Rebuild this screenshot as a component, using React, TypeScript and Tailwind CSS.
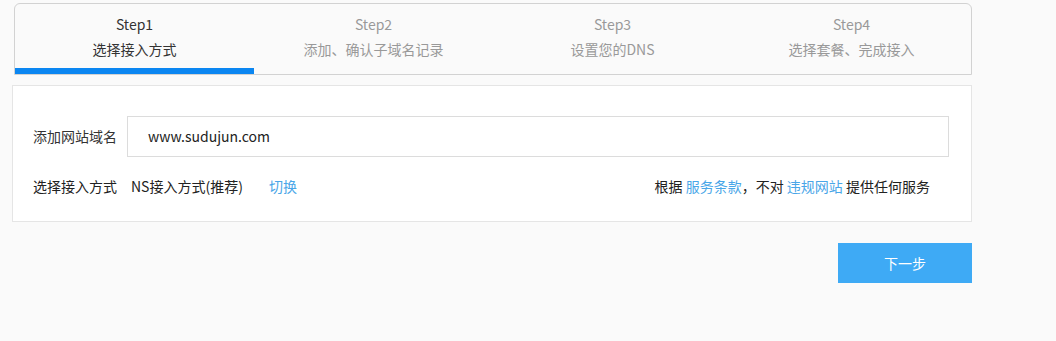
const steps = [
  { title: "Step1", desc: "选择接入方式" },
  { title: "Step2", desc: "添加、确认子域名记录" },
  { title: "Step3", desc: "设置您的DNS" },
  { title: "Step4", desc: "选择套餐、完成接入" },
];

export default function App() {
  const active = 0;
  return (
    <div
      className="min-h-[341px] w-full bg-[#fafafa] pl-[12px] pt-[3px]"
      style={{ fontFamily: '"Noto Sans CJK SC", "Noto Sans", sans-serif' }}
    >
      <div className="w-[960px]">
        <div className="ml-[2px] flex h-[72px] rounded-t-[6px] border border-[#d2d2d2] bg-[#fafafa] overflow-hidden">
          {steps.map((s, i) => (
            <div key={s.title} className="relative flex flex-1 flex-col items-center pt-[10px]">
              <div className={"text-[14px] leading-[20px] " + (i === active ? "text-[#333]" : "text-[#999]")}>
                {s.title}
              </div>
              <div className={"mt-[5px] text-[14px] leading-[20px] " + (i === active ? "text-[#333]" : "text-[#999]")}>
                {s.desc}
              </div>
              {i === active && (
                <div className="absolute bottom-0 left-0 right-0 h-[6px] bg-[#0b86f1]" />
              )}
            </div>
          ))}
        </div>

        <div className="mt-[10px] h-[137px] border border-[#e5e5e5] bg-white pl-[20px] pr-[22px] pt-[30px]">
          <div className="flex items-center">
            <span className="w-[94px] text-[14px] text-[#333]">添加网站域名</span>
            <div className="flex h-[41px] flex-1 items-center border border-[#dcdcdc] pl-[20px] text-[14px] text-[#222]">
              www.sudujun.com
            </div>
          </div>
          <div className="mt-[18px] flex items-center text-[14px] leading-[22px] text-[#222]">
            <span className="w-[98px]">选择接入方式</span>
            <span>NS接入方式(推荐)</span>
            <span className="ml-[26px] text-[#49a6e8]">切换</span>
            <span className="ml-auto mr-[19px]">
              根据 <span className="text-[#49a6e8]">服务条款</span>，不对{" "}
              <span className="text-[#49a6e8]">违规网站</span> 提供任何服务
            </span>
          </div>
        </div>

        <div className="mt-[21px] flex justify-end">
          <button className="h-[40px] w-[134px] bg-[#3eaaf5] text-[14px] text-white">下一步</button>
        </div>
      </div>
    </div>
  );
}
